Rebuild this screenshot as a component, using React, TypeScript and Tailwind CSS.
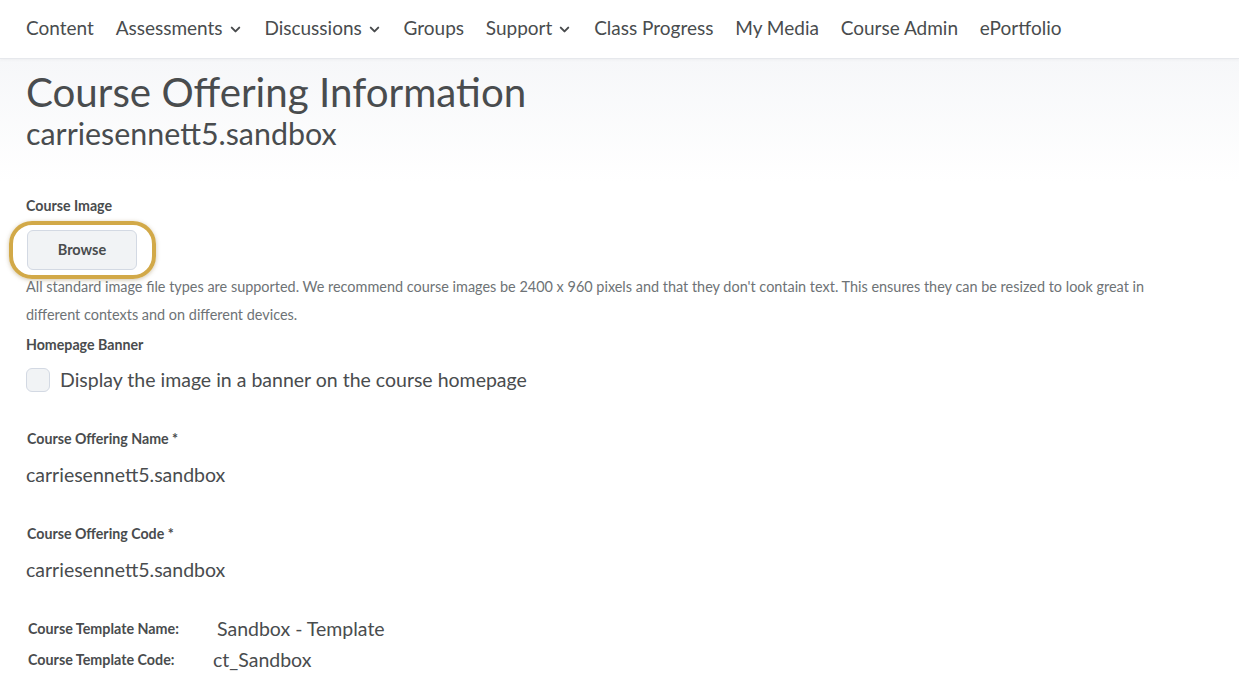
import { ChevronDown } from "lucide-react";

const navItems = [
  { name: "Content" },
  { name: "Assessments", menu: true },
  { name: "Discussions", menu: true },
  { name: "Groups" },
  { name: "Support", menu: true },
  { name: "Class Progress" },
  { name: "My Media" },
  { name: "Course Admin" },
  { name: "ePortfolio" },
];

function Label({ children }: { children: React.ReactNode }) {
  return <div className="text-[14.2px] font-bold leading-5 text-[#494c4e]">{children}</div>;
}

export default function App() {
  return (
    <div className="min-h-[698px] bg-white text-[#494c4e] [font-family:Lato,'Noto_Sans',sans-serif]">
      {/* Top navigation */}
      <nav className="relative z-10 flex h-[59px] items-center gap-[21.8px] border-b border-[#e6e8ec] bg-white px-[26px] shadow-[0_1px_3px_rgba(0,0,0,0.04)]">
        {navItems.map((item) => (
          <div key={item.name} className="flex items-center gap-[5px] pb-[3px] text-[19px] leading-none text-[#494c4e]">
            {item.name}
            {item.menu && <ChevronDown className="mt-[3px] h-[15px] w-[15px]" strokeWidth={3.2} />}
          </div>
        ))}
      </nav>

      {/* Page header */}
      <header className="bg-gradient-to-b from-[#f6f7f9] to-white px-[26px] pb-[31px] pt-[11px]">
        <h1 className="text-[40.3px] leading-[44px] text-[#494c4e]">Course Offering Information</h1>
        <div className="mt-[1px] text-[30.4px] leading-[36px] text-[#494c4e]">carriesennett5.sandbox</div>
      </header>

      {/* Form */}
      <main className="px-[26px] pt-[14px]">
        <Label>Course Image</Label>
        <div className="relative mt-[14px] flex w-fit">
          <span className="pointer-events-none absolute -left-[17px] -right-[19px] -top-[9px] -bottom-[9px] rounded-[23px] border-[4px] border-[#d2a948] shadow-[0_1px_4px_rgba(120,90,20,0.35)]" />
          <button className="ml-[1px] h-[40px] w-[110px] rounded-[6px] border border-[#d3d9e3] bg-[#f1f3f5] text-[14.5px] font-bold text-[#494c4e]">
            Browse
          </button>
        </div>
        <p className="mt-[3px] max-w-[1150px] text-[14.45px] leading-[28px] text-[#6e7376]">
          All standard image file types are supported. We recommend course images be 2400 x 960 pixels and that they don't contain text. This ensures they can be resized to look great in different contexts and on different devices.
        </p>

        <div className="mt-[6px]">
          <Label>Homepage Banner</Label>
        </div>
        <label className="mt-[13px] flex items-center gap-[10px]">
          <span className="h-[24px] w-[24px] rounded-[6px] border border-[#d3d9e3] bg-[#f1f3f5]" />
          <span className="text-[19.5px] leading-6 text-[#494c4e]">Display the image in a banner on the course homepage</span>
        </label>

        <div className="mt-[37px]">
          <Label>
            <span className="ml-[1px]">Course Offering Name *</span>
          </Label>
        </div>
        <div className="mt-[14px] text-[19.5px] leading-6">carriesennett5.sandbox</div>

        <div className="mt-[37px]">
          <Label>
            <span className="ml-[1px]">Course Offering Code *</span>
          </Label>
        </div>
        <div className="mt-[14px] text-[19.5px] leading-6">carriesennett5.sandbox</div>

        <div className="mt-[35px] grid grid-cols-[auto_1fr] items-center gap-y-[7px] pl-[2px]">
          <div className="w-[189px] text-[14.3px] font-bold leading-6">Course Template Name:</div>
          <div className="text-[19.5px] leading-6">Sandbox - Template</div>
          <div className="w-[185px] text-[14.3px] font-bold leading-6">Course Template Code:</div>
          <div className="-ml-[4px] text-[19.5px] leading-6">ct_Sandbox</div>
        </div>
      </main>
    </div>
  );
}
